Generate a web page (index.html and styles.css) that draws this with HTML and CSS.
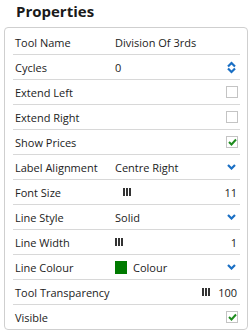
FILE: index.html
```html
<!DOCTYPE html>
<html lang="en">
<head>
    <meta charset="UTF-8">
    <title>Properties</title>
    <link rel="stylesheet" href="styles.css">
</head>
<body>
    <h2 class="panelTitle">Properties</h2>

    <div class="propList">
        <div class="propRow">
            <span class="propName">Tool Name</span>
            <span class="propValue">Division Of 3rds</span>
        </div>
        <div class="propRow">
            <span class="propName">Cycles</span>
            <span class="propValue">0</span>
            <svg class="spinIcon" width="9" height="13" viewBox="0 0 9 13">
                <path d="M1 5.5 L4.5 2 L8 5.5" />
                <path d="M1 7.5 L4.5 11 L8 7.5" />
            </svg>
        </div>
        <div class="propRow">
            <span class="propName">Extend Left</span>
            <span class="propValue"></span>
            <span class="checkBox"></span>
        </div>
        <div class="propRow">
            <span class="propName">Extend Right</span>
            <span class="propValue"></span>
            <span class="checkBox"></span>
        </div>
        <div class="propRow">
            <span class="propName">Show Prices</span>
            <span class="propValue"></span>
            <span class="checkBox"><svg width="9" height="8" viewBox="0 0 9 8"><path d="M1 4 L3.5 6.5 L8 1.5" /></svg></span>
        </div>
        <div class="propRow">
            <span class="propName">Label Alignment</span>
            <span class="propValue">Centre Right</span>
            <svg class="dropIcon" width="9" height="6" viewBox="0 0 9 6"><path d="M1 1 L4.5 4.5 L8 1" /></svg>
        </div>
        <div class="propRow">
            <span class="propName">Font Size</span>
            <span class="propValue slider">
                <span class="grip" style="left: 8px"><i></i><i></i><i></i></span>
            </span>
            <span class="numValue">11</span>
        </div>
        <div class="propRow">
            <span class="propName">Line Style</span>
            <span class="propValue">Solid</span>
            <svg class="dropIcon" width="9" height="6" viewBox="0 0 9 6"><path d="M1 1 L4.5 4.5 L8 1" /></svg>
        </div>
        <div class="propRow">
            <span class="propName">Line Width</span>
            <span class="propValue slider">
                <span class="grip" style="left: 0px"><i></i><i></i><i></i></span>
            </span>
            <span class="numValue">1</span>
        </div>
        <div class="propRow">
            <span class="propName">Line Colour</span>
            <span class="propValue colourValue"><span class="swatch"></span>Colour</span>
            <svg class="dropIcon" width="9" height="6" viewBox="0 0 9 6"><path d="M1 1 L4.5 4.5 L8 1" /></svg>
        </div>
        <div class="propRow">
            <span class="propName wide">Tool Transparency</span>
            <span class="propValue slider">
                <span class="grip" style="left: 87px"><i></i><i></i><i></i></span>
            </span>
            <span class="numValue">100</span>
        </div>
        <div class="propRow">
            <span class="propName">Visible</span>
            <span class="propValue"></span>
            <span class="checkBox"><svg width="9" height="8" viewBox="0 0 9 8"><path d="M1 4 L3.5 6.5 L8 1.5" /></svg></span>
        </div>
    </div>
</body>
</html>
```

FILE: styles.css
```css
body {
    font-family: 'Open Sans', 'DejaVu Sans', sans-serif;
    font-size: 11px;
    color: #222222;
    background-color: #ffffff;
    margin: 0;
    padding: 0 3px 0 4px;
}

.panelTitle {
    font-size: 15px;
    font-weight: bold;
    color: #1a1a1a;
    margin: 0;
    padding: 2px 0 0 12px;
    height: 25px;
    line-height: 19px;
}

.propList {
    border: 1px solid #cfcfcf;
    border-radius: 4px;
    padding: 2px 7px 0 8px;
}

.propRow {
    display: flex;
    align-items: center;
    height: 24px;
    border-bottom: 1px solid #d8d8d8;
    padding: 0 1px 0 2px;
}

.propRow:last-child {
    border-bottom: none;
}

.propName {
    width: 100px;
    flex: none;
    white-space: nowrap;
}

.propValue {
    flex: 1;
    white-space: nowrap;
}

.slider {
    position: relative;
    flex: none;
    width: 95px;
    height: 10px;
}

.grip {
    position: absolute;
    top: 1px;
    display: flex;
    gap: 1px;
}

.grip i {
    display: block;
    width: 2px;
    height: 8px;
    background-color: #333333;
}

.numValue {
    flex: 1;
    text-align: right;
    padding-right: 2px;
}

.spinIcon path,
.dropIcon path {
    fill: none;
    stroke: #1a6fc4;
    stroke-width: 2.2;
}

.spinIcon {
    margin-right: 3px;
}

.dropIcon {
    margin-right: 3px;
}

.checkBox {
    width: 10px;
    height: 10px;
    border: 1px solid #c4c4c4;
    display: flex;
    align-items: center;
    justify-content: center;
    margin-right: 1px;
}

.checkBox path {
    fill: none;
    stroke: #1e8c1e;
    stroke-width: 2;
}

.colourValue {
    display: flex;
    align-items: center;
}

.swatch {
    width: 12px;
    height: 13px;
    background-color: #007a00;
    margin-right: 6px;
}
```
